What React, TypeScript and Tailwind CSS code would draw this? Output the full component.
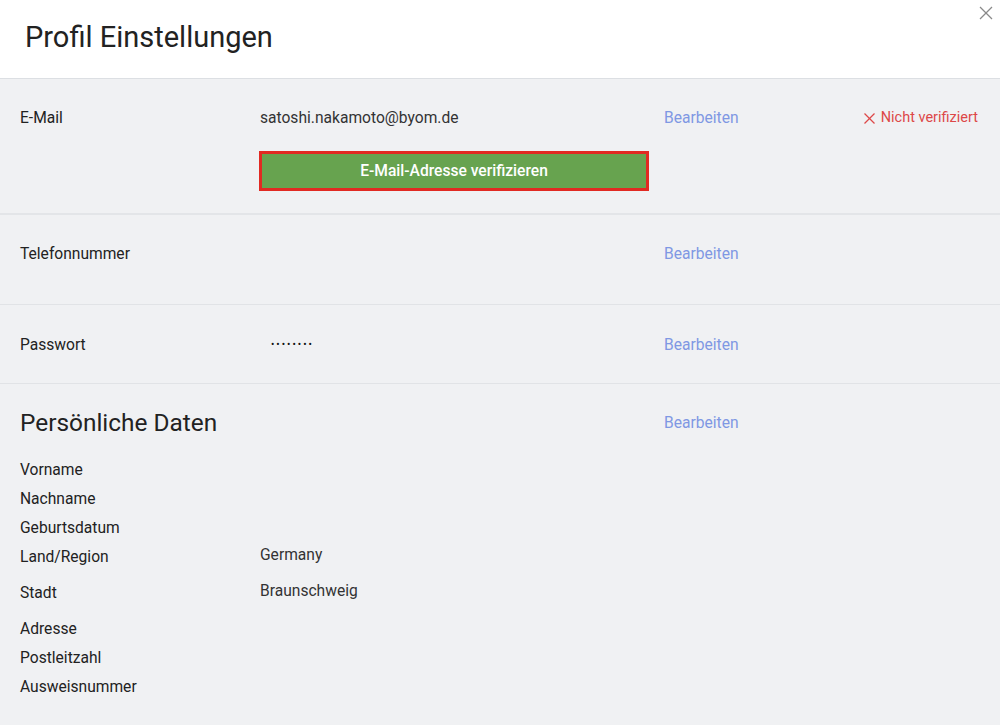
import React from "react";

const font = { fontFamily: "Roboto, 'Liberation Sans', sans-serif" };

function EditLink() {
  return (
    <a className="text-[15.6px] leading-[22px] text-[#7f98e3] cursor-pointer">Bearbeiten</a>
  );
}

function InfoRow({ label, value }: { label: string; value?: string }) {
  if (value) {
    return (
      <div className="flex h-[36px]">
        <div className="w-[240px] text-[15.6px] leading-[29px] text-[#222]">{label}</div>
        <div className="text-[15.6px] leading-[25px] text-[#333]">{value}</div>
      </div>
    );
  }
  return (
    <div className="flex h-[29px]">
      <div className="w-[240px] text-[15.6px] leading-[29px] text-[#222]">{label}</div>
    </div>
  );
}

export default function App() {
  return (
    <div style={font} className="w-[1000px] h-[725px] bg-[#f0f1f3] overflow-hidden flex flex-col">
      {/* Header */}
      <header className="relative h-[79px] bg-white border-b border-[#dcdfe3] shrink-0">
        <h1 className="pl-[25px] pt-[18px] text-[29px] leading-[38px] text-[#222]">Profil Einstellungen</h1>
        <button className="absolute top-[6px] right-[7px] w-[14px] h-[14px] text-[#8a8a8a]">
          <svg viewBox="0 0 14 14" width="14" height="14" fill="none" stroke="currentColor" strokeWidth="1.2">
            <line x1="1" y1="1" x2="13" y2="13" />
            <line x1="13" y1="1" x2="1" y2="13" />
          </svg>
        </button>
      </header>

      {/* E-Mail */}
      <section className="h-[136px] border-b-2 border-[#e3e5e8] pt-[28px] px-[20px] shrink-0">
        <div className="flex items-center">
          <div className="w-[240px] text-[15.6px] leading-[22px] text-[#222]">E-Mail</div>
          <div className="w-[404px] text-[15.6px] leading-[22px] text-[#333]">satoshi.nakamoto@byom.de</div>
          <EditLink />
          <div className="ml-auto mr-[2px] flex items-center gap-[6px] text-[14.5px] leading-[22px] text-[#dd4848]">
            <svg viewBox="0 0 11 11" width="11" height="11" fill="none" stroke="currentColor" strokeWidth="1.3">
              <line x1="0.5" y1="0.5" x2="10.5" y2="10.5" />
              <line x1="10.5" y1="0.5" x2="0.5" y2="10.5" />
            </svg>
            Nicht verifiziert
          </div>
        </div>
        <div className="pl-[239px] mt-[22px]">
          <button className="w-[390px] h-[40px] bg-[#67a34f] border-[3px] border-[#e12a22] text-white text-[15.6px] leading-[30px] font-medium">
            E-Mail-Adresse verifizieren
          </button>
        </div>
      </section>

      {/* Telefonnummer */}
      <section className="h-[90px] border-b border-[#e1e3e6] pt-[28px] px-[20px] shrink-0">
        <div className="flex items-center">
          <div className="w-[644px] text-[15.6px] leading-[22px] text-[#222]">Telefonnummer</div>
          <EditLink />
        </div>
      </section>

      {/* Passwort */}
      <section className="h-[79px] border-b border-[#e1e3e6] pt-[29px] px-[20px] shrink-0">
        <div className="flex items-center">
          <div className="w-[240px] text-[15.6px] leading-[22px] text-[#222]">Passwort</div>
          <div className="w-[404px] pl-[11px] text-[10px] leading-[22px] tracking-[2px] text-[#111]">••••••••</div>
          <EditLink />
        </div>
      </section>

      {/* Persönliche Daten */}
      <section className="pt-[24px] px-[20px]">
        <div className="flex items-center">
          <h2 className="w-[644px] text-[24.4px] leading-[30px] text-[#222]">Persönliche Daten</h2>
          <EditLink />
        </div>
        <div className="mt-[18px]">
          <InfoRow label="Vorname" />
          <InfoRow label="Nachname" />
          <InfoRow label="Geburtsdatum" />
          <InfoRow label="Land/Region" value="Germany" />
          <InfoRow label="Stadt" value="Braunschweig" />
          <InfoRow label="Adresse" />
          <InfoRow label="Postleitzahl" />
          <InfoRow label="Ausweisnummer" />
        </div>
      </section>
    </div>
  );
}
